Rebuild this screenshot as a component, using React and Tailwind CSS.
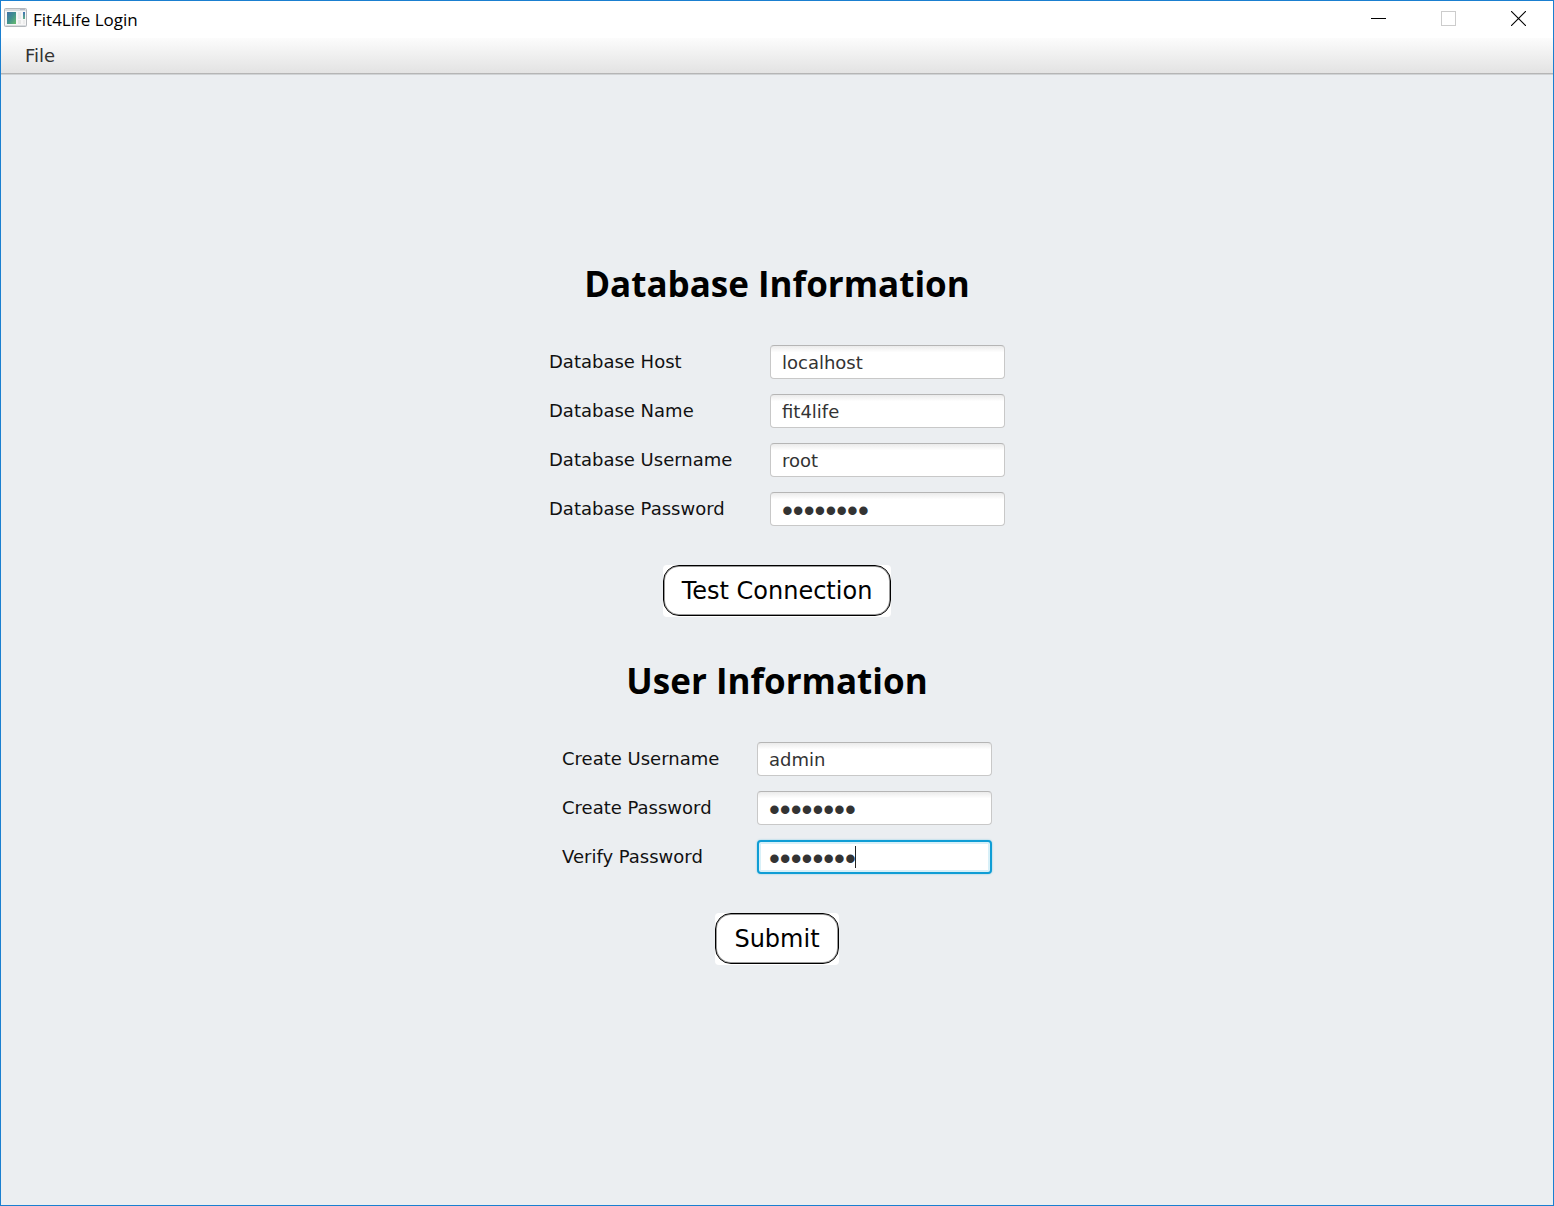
import React from "react";

function AppIcon() {
  return (
    <svg width="23" height="19" viewBox="0 0 23 19" aria-hidden="true">
      <defs>
        <linearGradient id="pane" x1="0" y1="0" x2="1" y2="1">
          <stop offset="0" stopColor="#3f6fa8" />
          <stop offset="0.5" stopColor="#42918f" />
          <stop offset="1" stopColor="#68bd6c" />
        </linearGradient>
        <linearGradient id="strip" x1="0" y1="0" x2="0" y2="1">
          <stop offset="0" stopColor="#3f72b4" />
          <stop offset="1" stopColor="#62b285" />
        </linearGradient>
      </defs>
      <rect x="0.5" y="0.5" width="22" height="18" rx="1" fill="#d9dcdf" stroke="#b4b8bc" />
      <rect x="16" y="1" width="5" height="1" fill="#b4b9c6" />
      <rect x="1" y="3" width="21" height="14" fill="#f7f7f7" />
      <rect x="3" y="4" width="9" height="12" fill="url(#pane)" />
      <rect x="14" y="4" width="3" height="7" fill="#ebebeb" />
      <rect x="14" y="12" width="3" height="4" fill="#e6e6e6" />
      <rect x="19" y="4" width="2" height="7" fill="url(#strip)" />
      <rect x="19" y="12" width="2" height="4" fill="#ececec" />
    </svg>
  );
}

function TitleBar() {
  return (
    <header className="flex h-[37px] items-start justify-between bg-white">
      <div className="flex items-start gap-[6px] pt-[7px] pl-[3px]">
        <AppIcon />
        <h1 className="font-['Open_Sans',sans-serif] text-[17px] leading-6 text-black">Fit4Life Login</h1>
      </div>
      <div className="flex h-[35px]">
        <button type="button" aria-label="Minimize" className="flex w-[70px] items-center justify-center">
          <svg width="15" height="15" shapeRendering="crispEdges">
            <path d="M0 7.5H15" stroke="#000" />
          </svg>
        </button>
        <button type="button" aria-label="Maximize" disabled className="flex w-[70px] items-center justify-center">
          <svg width="15" height="15" shapeRendering="crispEdges">
            <rect x="0.5" y="0.5" width="14" height="14" fill="none" stroke="#ccc" />
          </svg>
        </button>
        <button type="button" aria-label="Close" className="flex w-[70px] items-center justify-center">
          <svg width="15" height="15">
            <path d="M0 0L15 15M15 0L0 15" stroke="#000" strokeWidth="1.1" />
          </svg>
        </button>
      </div>
    </header>
  );
}

function Field({ id, label, type = "text", value, focused = false }) {
  const textStyle =
    type === "password" ? "pt-1 font-['Liberation_Sans',sans-serif] text-[31px]" : "text-[18px]";
  return (
    <>
      <label htmlFor={id} className="whitespace-nowrap text-[18px] leading-6 text-[#111]">
        {label}
      </label>
      {focused ? (
        <div className="relative">
          <input
            id={id}
            type={type}
            defaultValue={value}
            className={`block h-[34px] w-full rounded-[4px] border-2 border-[#0f9dd5] bg-white px-[10px] text-[#333] caret-transparent shadow-[0_0_2px_#7cc9e4,inset_0_0_0_2px_#d8f0f8] outline-none ${textStyle}`}
          />
          <span className="pointer-events-none absolute top-[6px] left-[98px] h-[22px] w-px bg-[#222]" />
        </div>
      ) : (
        <input
          id={id}
          type={type}
          defaultValue={value}
          className={`block h-[34px] w-full rounded-[4px] border border-[#c8c8c8] border-t-[#b5b5b5] bg-white bg-linear-to-b from-[#ebebeb] to-white to-20% px-[11px] text-[#333] outline-none ${textStyle}`}
        />
      )}
    </>
  );
}

function ActionButton({ children }) {
  return (
    <div className="rounded-[4px] bg-white pb-px">
      <button type="button" className="block h-[51px] rounded-[16px] border border-black bg-white px-[18px] text-[24px] leading-8 text-black shadow-[inset_0_0_0_1px_#999]">
        {children}
      </button>
    </div>
  );
}

function SectionTitle({ children }) {
  return (
    <h2 className="font-['Open_Sans',sans-serif] text-[35px] leading-[52px] font-bold text-black">{children}</h2>
  );
}

export default function App() {
  return (
    <div className="flex min-h-screen flex-col border border-[#1a7fd0] bg-[#ebeef1] font-['DejaVu_Sans',sans-serif]">
      <TitleBar />
      <nav className="flex h-[36px] items-center border-b border-[#b5b5b5] bg-linear-to-b from-[#fcfcfc] to-[#e3e3e3] px-4">
        <button type="button" className="px-2 text-[18px] leading-6 text-[#333]">File</button>
      </nav>
      <main className="flex grow flex-col items-center border-t border-[#d0d3d5] pt-[183px]">
        <SectionTitle>Database Information</SectionTitle>
        <form className="mt-[35px] grid grid-cols-[183px_235px] items-center gap-x-[38px] gap-y-[15px]">
          <Field id="db-host" label="Database Host" value="localhost" />
          <Field id="db-name" label="Database Name" value="fit4life" />
          <Field id="db-user" label="Database Username" value="root" />
          <Field id="db-pass" label="Database Password" type="password" value="password" />
        </form>
        <div className="mt-[39px]">
          <ActionButton>Test Connection</ActionButton>
        </div>
        <div className="mt-[38px]">
          <SectionTitle>User Information</SectionTitle>
        </div>
        <form className="mt-[35px] grid grid-cols-[157px_235px] items-center gap-x-[38px] gap-y-[15px]">
          <Field id="new-user" label="Create Username" value="admin" />
          <Field id="new-pass" label="Create Password" type="password" value="password" />
          <Field id="verify-pass" label="Verify Password" type="password" value="password" focused />
        </form>
        <div className="mt-[39px]">
          <ActionButton>Submit</ActionButton>
        </div>
      </main>
    </div>
  );
}
